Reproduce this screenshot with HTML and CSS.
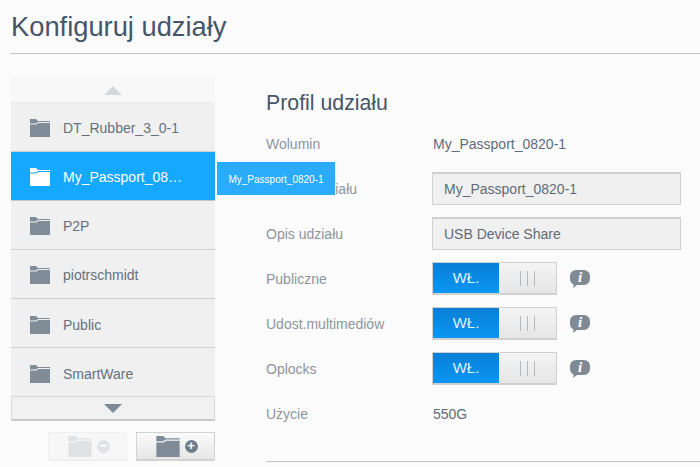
FILE: index.html
```html
<!DOCTYPE html>
<html lang="pl">
<head>
  <meta charset="UTF-8">
  <title>Konfiguruj udziały</title>
  <link rel="stylesheet" href="styles.css">
</head>
<body>
  <svg class="defs" width="0" height="0">
    <symbol id="folder" viewBox="0 0 20 18">
      <path d="M0 0h6l2 2h12v1H8L6 4.5H0z"/>
      <path d="M0 5.5h6.500l2-1.500H20v14H0z"/>
    </symbol>
    <symbol id="bubble" viewBox="0 0 20 18">
      <path d="M6 0h8a6 6 0 0 1 6 6v3a6 6 0 0 1-6 6H7l-4 3 .6-3.600A6 6 0 0 1 0 9V6a6 6 0 0 1 6-6z"/>
    </symbol>
  </svg>

  <h1 class="title">Konfiguruj udziały</h1>

  <div class="main">
    <div class="side">
      <div class="list">
        <div class="arrow arrow-up"><span class="tri tri-up"></span></div>
        <div class="item"><svg class="folder"><use href="#folder"/></svg><span>DT_Rubber_3_0-1</span></div>
        <div class="item selected"><svg class="folder"><use href="#folder"/></svg><span>My_Passport_08…</span></div>
        <div class="item"><svg class="folder"><use href="#folder"/></svg><span>P2P</span></div>
        <div class="item"><svg class="folder"><use href="#folder"/></svg><span>piotrschmidt</span></div>
        <div class="item"><svg class="folder"><use href="#folder"/></svg><span>Public</span></div>
        <div class="item"><svg class="folder"><use href="#folder"/></svg><span>SmartWare</span></div>
        <div class="arrow arrow-down"><span class="tri tri-down"></span></div>
      </div>
      <div class="tooltip">My_Passport_0820-1</div>
      <div class="side-buttons">
        <div class="btn btn-off">
          <svg class="btn-folder"><use href="#folder"/></svg><span class="round">−</span>
        </div>
        <div class="btn">
          <svg class="btn-folder"><use href="#folder"/></svg><span class="round">+</span>
        </div>
      </div>
    </div>

    <div class="profile">
      <h2 class="profile-title">Profil udziału</h2>
      <div class="row"><div class="label">Wolumin</div><div class="value">My_Passport_0820-1</div></div>
      <div class="row"><div class="label">Nazwa udziału</div><div class="field">My_Passport_0820-1</div></div>
      <div class="row"><div class="label">Opis udziału</div><div class="field">USB Device Share</div></div>
      <div class="row">
        <div class="label">Publiczne</div>
        <div class="toggle"><div class="on">WŁ.</div><div class="grip"><i></i><i></i><i></i></div></div>
        <div class="info"><svg class="bubble"><use href="#bubble"/></svg><span class="info-i">i</span></div>
      </div>
      <div class="row">
        <div class="label">Udost.multimediów</div>
        <div class="toggle"><div class="on">WŁ.</div><div class="grip"><i></i><i></i><i></i></div></div>
        <div class="info"><svg class="bubble"><use href="#bubble"/></svg><span class="info-i">i</span></div>
      </div>
      <div class="row">
        <div class="label">Oplocks</div>
        <div class="toggle"><div class="on">WŁ.</div><div class="grip"><i></i><i></i><i></i></div></div>
        <div class="info"><svg class="bubble"><use href="#bubble"/></svg><span class="info-i">i</span></div>
      </div>
      <div class="row"><div class="label">Użycie</div><div class="value">550G</div></div>
      <div class="profile-end"></div>
    </div>
  </div>
</body>
</html>
```

FILE: styles.css
```css
html, body { height: 467px; overflow: hidden; }
body { margin: 0; background-color: #fbfbfb; font-family: "Liberation Sans", Arial, sans-serif; color: #5f6b78; }
.defs { position: absolute; }

.title { margin: 0 0 0 10px; padding-left: 1px; height: 53px; line-height: 53px; font-size: 27.300px; font-weight: normal; color: #46566a; border-bottom: 1px solid #c4c4c4; }

.main { display: flex; padding: 24px 0 0 11px; }
.side { position: relative; width: 204px; }
.list { display: flex; flex-direction: column; }
.arrow { display: flex; align-items: center; justify-content: center; box-sizing: border-box; height: 25px; background-color: #f8f8f8; }
.arrow-up { border-top: 1px solid #f2f2f2; border-bottom: 1px solid #ededed; }
.arrow-down { border: 1px solid #d9d9d9; border-bottom: 2px solid #c9c9c9; background-color: #f1f1f1; }
.tri { width: 0; height: 0; border-left: 9px solid transparent; border-right: 9px solid transparent; }
.tri-up { border-bottom: 9px solid #d5d9dc; }
.tri-down { border-top: 9px solid #7d8b98; }

.item { display: flex; align-items: center; box-sizing: border-box; height: 49px; padding: 1px 0 0 19px; background-color: #f0f0f0; border-bottom: 1px solid #cfcfcf; font-size: 14px; color: #66707c; }
.item:nth-last-child(2) { height: 48px; border-bottom: none; }
.item:nth-child(6), .item:nth-child(7) { padding-top: 3px; }
.item.selected { background-color: #15a8ff; color: #fff; border-bottom-color: #c5c5c5; }
.folder { width: 20px; height: 18px; margin-right: 13px; fill: #808d99; }
.selected .folder { fill: #fff; }

.tooltip { position: absolute; left: 206px; top: 84px; width: 118px; height: 33px; line-height: 35px; background-color: #2aabfb; color: #fff; font-size: 10px; text-align: center; }

.side-buttons { display: flex; justify-content: flex-end; gap: 9px; margin-top: 11px; }
.btn { display: flex; align-items: center; justify-content: center; gap: 5px; box-sizing: border-box; width: 79px; height: 29px; padding-left: 2px; border: 1px solid #d2d2d2; border-bottom-width: 2px; background: linear-gradient(#fbfbfb, #e6e6e6); }
.btn-folder { width: 24px; height: 21px; fill: #7f8c98; }
.round { width: 13px; height: 13px; border-radius: 50%; background-color: #6f7d8a; color: #fff; font-size: 13px; font-weight: bold; line-height: 12px; text-align: center; }
.btn-off { background: #f7f7f7; border-color: #efefef; }
.btn-off .btn-folder { fill: #dfe3e6; }
.btn-off .round { background-color: #dfe3e6; }

.profile { flex: 1; padding-left: 51px; }
.profile-title { margin: 0 0 3px; height: 30px; line-height: 30px; font-size: 21.300px; font-weight: normal; color: #46566a; padding-top: 10px; }
.row { display: flex; align-items: center; height: 45px; font-size: 14px; }
.label { width: 166px; color: #8e959e; }
.value { padding-left: 1px; color: #5f6b78; }
.field { box-sizing: border-box; width: 249px; height: 33px; line-height: 31px; padding-left: 11px; background-color: #f0f0f0; border: 1px solid #d0d0d0; border-top-width: 2px; color: #5f6b78; }

.toggle { display: flex; box-sizing: border-box; width: 125px; height: 33px; border: 1px solid #d0d0d0; border-bottom-width: 2px; }
.on { width: 66px; background: linear-gradient(#0a7fd6, #0a96f2); color: #dff1ff; line-height: 30px; text-align: center; font-size: 15px; }
.grip { flex: 1; display: flex; align-items: center; justify-content: center; gap: 5.700px; background: linear-gradient(#f4f4f4, #e6e6e6); }
.grip i { width: 1px; height: 15px; background-color: #b4b9be; }
.info { position: relative; width: 20px; height: 18px; margin-left: 13px; }
.bubble { display: block; width: 20px; height: 18px; fill: #7f8a94; }
.info-i { position: absolute; left: 0; top: 0; width: 20px; height: 15px; line-height: 15px; text-align: center; font-family: "Liberation Serif", serif; font-size: 15px; font-weight: bold; font-style: italic; color: #fff; }

.profile-end { margin-top: 25px; border-top: 1px solid #c4c4c4; }
```
